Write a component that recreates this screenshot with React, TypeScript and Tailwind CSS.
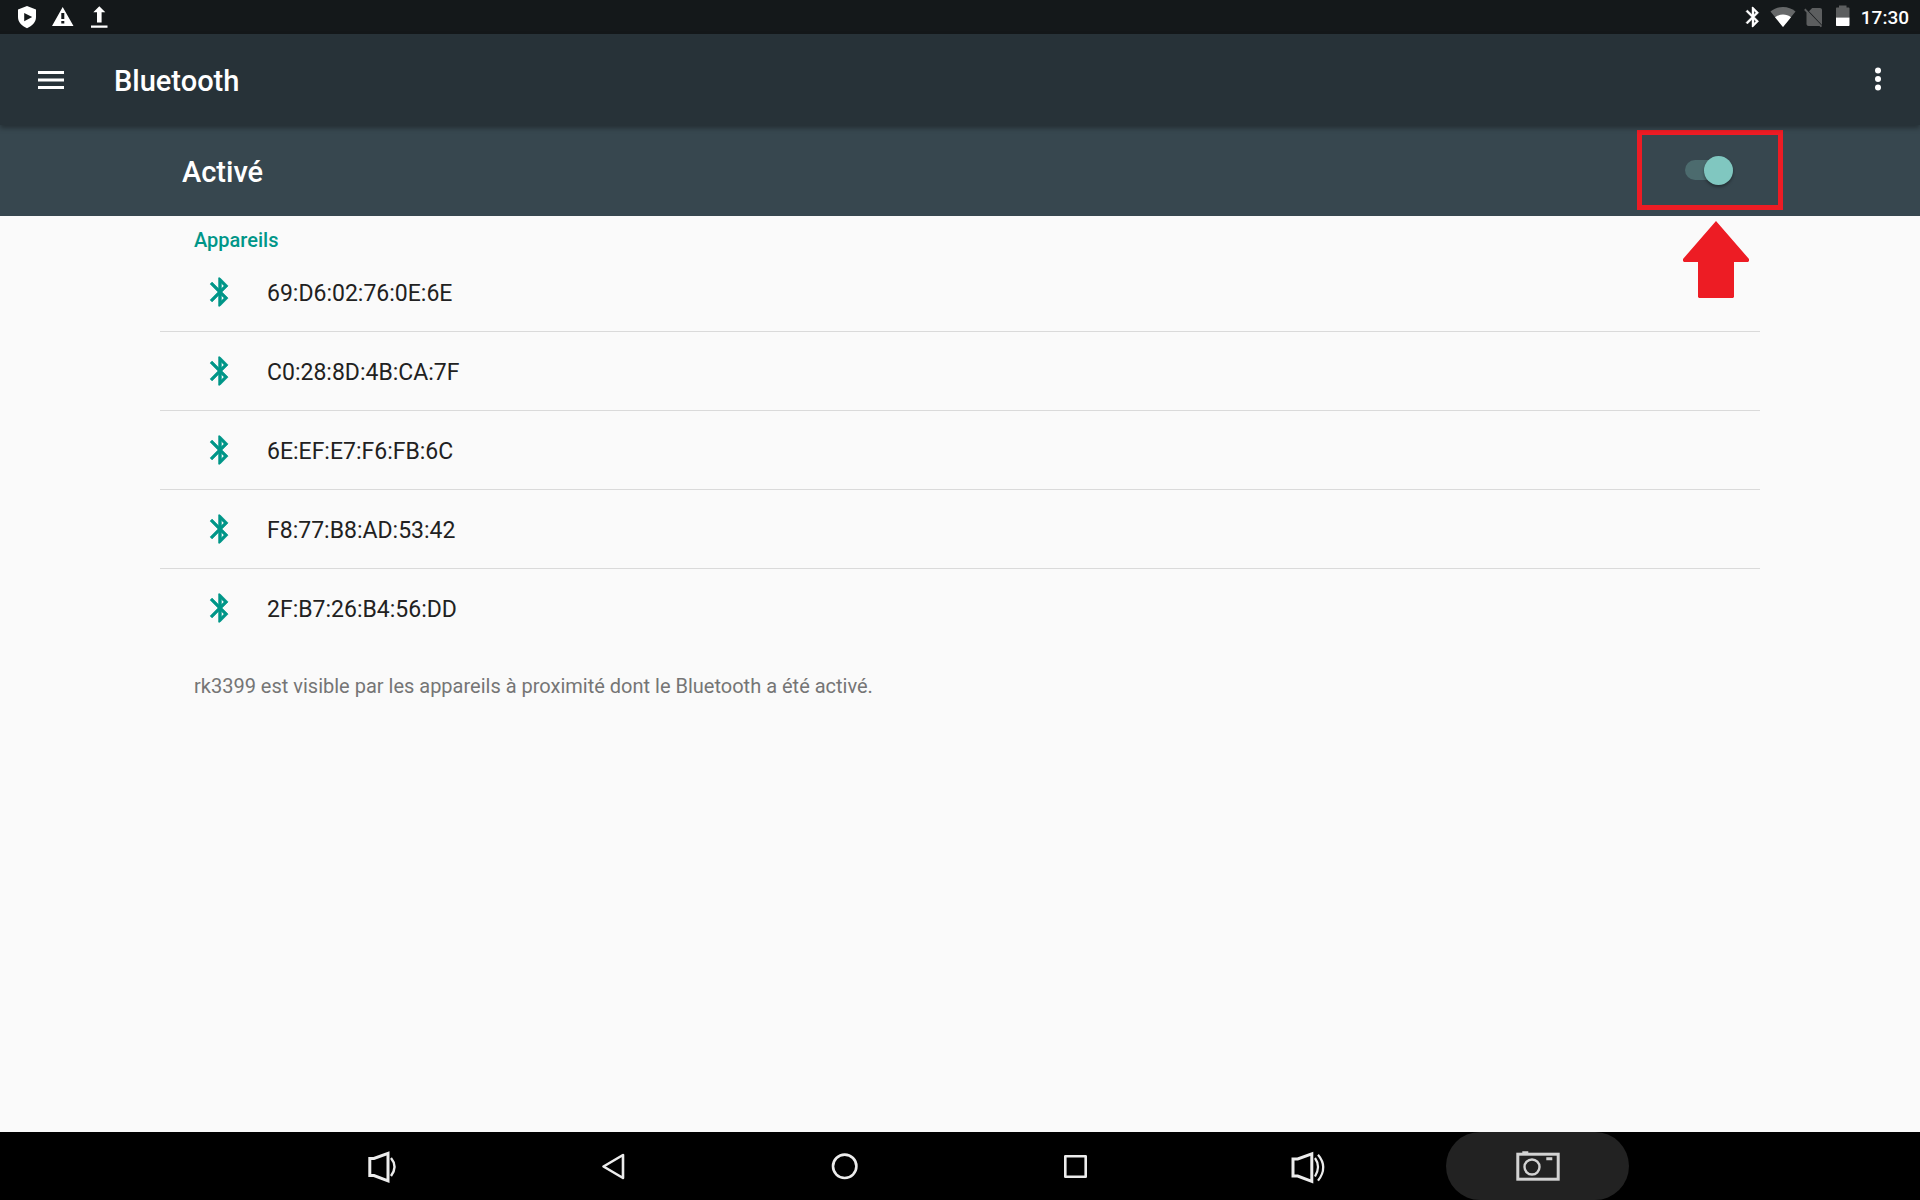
import { useState, type ReactNode } from "react";

const devices = [
  "69:D6:02:76:0E:6E",
  "C0:28:8D:4B:CA:7F",
  "6E:EF:E7:F6:FB:6C",
  "F8:77:B8:AD:53:42",
  "2F:B7:26:B4:56:DD",
];

function BluetoothIcon({ className }: { className: string }) {
  return (
    <svg
      viewBox="0 0 24 24"
      fill="currentColor"
      stroke="currentColor"
      strokeWidth="0.4"
      className={className}
      aria-hidden="true"
    >
      <path d="M17.71 7.71L12 2h-1v7.59L6.41 5 5 6.41 10.59 12 5 17.59 6.41 19 11 14.41V22h1l5.71-5.71-4.3-4.29 4.3-4.29zM13 5.83l1.88 1.88L13 9.59V5.83zm1.88 10.46L13 18.17v-3.76l1.88 1.88z" />
    </svg>
  );
}

function StatusBar() {
  return (
    <div className="flex h-[34px] items-center justify-between bg-[#14181a] pl-4 pr-[11px] text-white">
      <div className="flex items-center gap-3">
        <svg viewBox="0 0 24 24" className="h-6 w-6" fill="currentColor">
          <path fillRule="evenodd" d="M11 1L20 4.6V12c0 5.4-3.8 9-9 11.2C5.8 21 2 17.4 2 12V4.6zM8.2 8v8.2L16.2 12z" />
        </svg>
        <svg viewBox="0 0 24 24" className="h-6 w-6" fill="currentColor">
          <path fillRule="evenodd" d="M0 21h21.5L10.7 2zM9.3 8h3v6h-3zM9.3 16h3v2.6h-3z" />
        </svg>
        <svg viewBox="0 0 24 24" className="h-6 w-6" fill="currentColor">
          <path d="M11.3 1.3l6 6h-3.7v10.2H9V7.3H5.3zM3 20.5h16.5v2.2H3z" />
        </svg>
      </div>
      <div className="flex items-center">
        <BluetoothIcon className="mr-[5px] h-6 w-6" />
        <svg viewBox="0 0 26 24" className="mr-2 h-6 w-[26px]" fill="currentColor">
          <path opacity="0.35" d="M13 22L.5 6.5C4 3.5 8.3 2 13 2s9 1.5 12.5 4.5z" />
          <path d="M13 22L5 12.2C7.3 10.4 10 9.6 13 9.6s5.7.8 8 2.6z" />
        </svg>
        <svg viewBox="0 0 20 24" className="mr-[10px] h-6 w-5" fill="#5c5e5f">
          <path d="M18 20V5c0-1.1-.9-2-2-2H8.2L5 6.200z" />
          <path d="M1.400 3.600L.1 4.900 2.500 7.400V19c0 1.100.9 2 2 2h11l1.300 1.300 1.300-1.300z" />
        </svg>
        <svg viewBox="0 0 20 24" className="mr-[7px] h-6 w-5">
          <path fill="#5c5e5f" d="M2 12.5V3.500c0-.6.4-1 1-1h2V.5h7.5v2h2c.6 0 1 .4 1 1v9z" />
          <path fill="#fff" d="M2 12.5h13.500v7.500c0 .6-.4 1-1 1H3c-.6 0-1-.4-1-1z" />
        </svg>
        <time className="pt-0.5 text-[19px] leading-6 font-medium">17:30</time>
      </div>
    </div>
  );
}

function NavButton({ label, active, children }: { label: string; active?: boolean; children: ReactNode }) {
  return (
    <button
      aria-label={label}
      className={
        active
          ? "flex h-[68px] w-[183px] items-center justify-center rounded-full bg-[#222222] text-[#d3d3d3]"
          : "flex h-[68px] w-[183px] items-center justify-center rounded-full text-[#ececec]"
      }
    >
      <svg viewBox="0 0 47 36" className="h-9 w-[47px]" fill="none" stroke="currentColor" strokeWidth="2.6">
        {children}
      </svg>
    </button>
  );
}

export default function App() {
  const [enabled, setEnabled] = useState(true);

  return (
    <div className="flex min-h-screen flex-col bg-[#fafafa] font-[Roboto,sans-serif]">
      <StatusBar />

      {/* App bar */}
      <header className="z-10 flex h-[91px] items-center bg-[#273238] pr-[25px] pl-[34px] text-white shadow-[0_3px_5px_rgba(0,0,0,0.35)]">
        <button aria-label="Menu" className="flex w-[34px] justify-center">
          <svg viewBox="0 0 26 18" className="h-[18px] w-[26px]" fill="currentColor">
            <path d="M0 0h26v3H0zM0 7.5h26v3H0zM0 15h26v3H0z" />
          </svg>
        </button>
        <h1 className="ml-[46px] flex-1 pt-0.5 text-[29px] leading-8 font-medium">Bluetooth</h1>
        <button aria-label="Plus d'options" className="flex w-[34px] justify-center pb-0.5">
          <svg viewBox="0 0 6 24" className="h-6 w-[6px]" fill="currentColor">
            <circle cx="3" cy="3.5" r="3" />
            <circle cx="3" cy="12" r="3" />
            <circle cx="3" cy="20.5" r="3" />
          </svg>
        </button>
      </header>

      {/* Main switch */}
      <section className="relative flex h-[91px] items-center justify-between bg-[#37474f] pr-[187px] pl-[182px] text-white">
        <label htmlFor="bt" className="pt-0.5 text-[29px] leading-8 font-medium">
          Activé
        </label>
        <input
          id="bt"
          type="checkbox"
          role="switch"
          checked={enabled}
          onChange={() => setEnabled(!enabled)}
          className="relative mb-0.5 h-5 w-12 cursor-pointer appearance-none rounded-full bg-[#4c6b6e] before:absolute before:-top-1 before:left-0 before:size-[29px] before:rounded-full before:bg-[#b9b9b9] before:shadow-[0_2px_3px_rgba(0,0,0,0.35)] checked:before:left-[19px] checked:before:bg-[#80c7c0]"
        />
        {/* Callout around the switch */}
        <div className="pointer-events-none absolute top-[5px] right-[137px] h-20 w-[146px] border-5 border-[#ed1c24]" />
        <svg
          viewBox="0 0 66 77"
          className="pointer-events-none absolute top-24 right-[171px] h-[77px] w-[66px]"
          fill="#ed1c24"
        >
          <path d="M33 0L66 38v2l-1 1H51v35l-1 1H16l-1-1V41H1l-1-1v-2z" />
        </svg>
      </section>

      <main className="flex-1 px-40">
        <h2 className="px-[34px] pt-3 text-[20px] leading-[25px] font-medium text-[#009688]">Appareils</h2>
        <ul>
          {devices.map((device) => (
            <li key={device} className="border-b border-[#dadada] last:border-transparent">
              <button className="flex h-[78px] w-full items-center px-[43px] text-left text-[23px] leading-8 text-[#212121]">
                <BluetoothIcon className="mr-[30px] size-[34px] text-[#009688]" />
                <span className="pt-1">{device}</span>
              </button>
            </li>
          ))}
        </ul>
        <p className="px-[34px] pt-6 text-[20px] leading-7 text-[#757575]">
          rk3399 est visible par les appareils à proximité dont le Bluetooth a été activé.
        </p>
      </main>

      <nav className="flex justify-center gap-12 bg-black">
        <NavButton label="Baisser le volume">
          <path d="M10.8 10.5H15L29 5.3v27.5L15 27.5h-4.2z" strokeWidth="3" />
          <path d="M32 10q7 8.500 0 18" strokeWidth="2.4" />
        </NavButton>
        <NavButton label="Retour">
          <path d="M13.5 18.5L33 7v23z" strokeLinejoin="round" />
        </NavButton>
        <NavButton label="Accueil">
          <circle cx="23.7" cy="18.3" r="11.7" />
        </NavButton>
        <NavButton label="Applications récentes">
          <rect x="13.3" y="8.3" width="20.4" height="20.4" strokeLinejoin="round" />
        </NavButton>
        <NavButton label="Augmenter le volume">
          <path d="M10 11h4.700L28.800 5.800v27.500L14.700 28H10z" strokeWidth="3" />
          <path d="M32 10q6 8.500 0 18.500M35 6.700q10.500 12.300 0 26" strokeWidth="2.2" />
        </NavButton>
        <NavButton label="Capture d'écran" active>
          <rect x="3.8" y="6.2" width="40.4" height="25" strokeWidth="3" />
          <circle cx="18" cy="19" r="7.5" strokeWidth="2.4" />
          <path d="M32.300 10.800h6M8.300 4.800h6" strokeWidth="3" />
        </NavButton>
      </nav>
    </div>
  );
}
